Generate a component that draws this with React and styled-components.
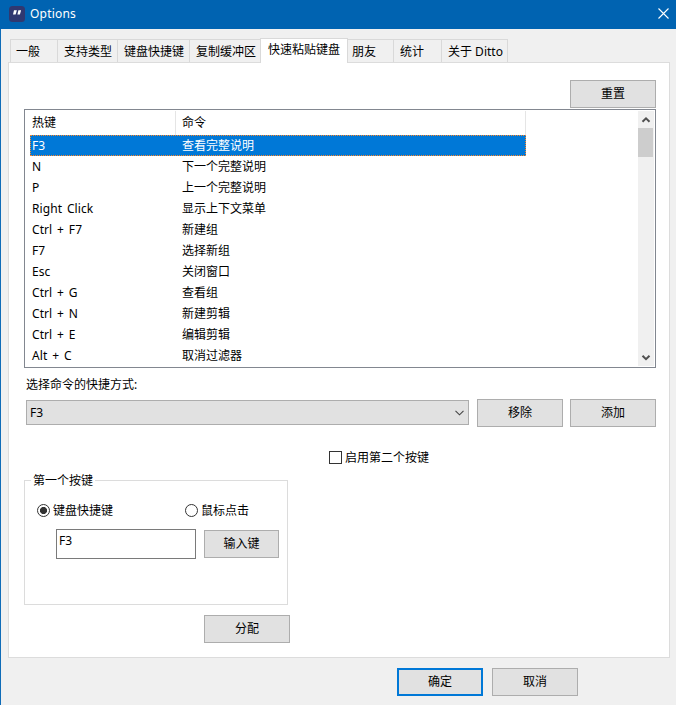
import React, { useState } from 'react';
import styled, { createGlobalStyle } from 'styled-components';

const tabs = [
  { label: '一般', width: 47 },
  { label: '支持类型', width: 60 },
  { label: '键盘快捷键', width: 72 },
  { label: '复制缓冲区', width: 71 },
  { label: '快速粘贴键盘', width: 87 },
  { label: '朋友', width: 46 },
  { label: '统计', width: 48 },
  { label: '关于 Ditto', width: 66 },
];

const shortcuts = [
  { key: 'F3', command: '查看完整说明' },
  { key: 'N', command: '下一个完整说明' },
  { key: 'P', command: '上一个完整说明' },
  { key: 'Right Click', command: '显示上下文菜单' },
  { key: 'Ctrl + F7', command: '新建组' },
  { key: 'F7', command: '选择新组' },
  { key: 'Esc', command: '关闭窗口' },
  { key: 'Ctrl + G', command: '查看组' },
  { key: 'Ctrl + N', command: '新建剪辑' },
  { key: 'Ctrl + E', command: '编辑剪辑' },
  { key: 'Alt + C', command: '取消过滤器' },
];

const App = () => {
  const [activeTab, setActiveTab] = useState(4);
  const [selected, setSelected] = useState(0);
  const [inputType, setInputType] = useState('keyboard');
  const [second, setSecond] = useState(false);

  return (
    <>
      <GlobalStyle />
      <Window>
        <TitleBar>
          <AppIcon viewBox="0 0 16 16">
            <rect width="16" height="16" rx="3.5" fill="#303870" />
            <path d="M5 4.2h2.9L6.6 8.4H4zM9.4 4.2h2.7L10.9 8.4H8.4z" fill="#fff" />
          </AppIcon>
          <Title>Options</Title>
          <CloseIcon viewBox="0 0 11 11">
            <path d="M.5.5l10 10M10.5.5l-10 10" stroke="#fff" strokeWidth="1.1" />
          </CloseIcon>
        </TitleBar>

        <TabStrip>
          {tabs.map((tab, i) => (
            <Tab
              key={tab.label}
              $width={tab.width}
              $active={i === activeTab}
              $first={i === 0}
              $afterActive={i === activeTab + 1}
              onClick={() => setActiveTab(i)}
            >
              {tab.label}
            </Tab>
          ))}
        </TabStrip>

        <Page>
          <ResetRow>
            <Button>重置</Button>
          </ResetRow>

          <ListView>
            <ListBody>
              <HeaderRow>
                <HeaderCell $width={151}>热键</HeaderCell>
                <HeaderCell $width={350}>命令</HeaderCell>
              </HeaderRow>
              {shortcuts.map((item, i) => (
                <Row key={item.key} $selected={i === selected} onClick={() => setSelected(i)}>
                  <KeyCell>{item.key}</KeyCell>
                  <span>{item.command}</span>
                </Row>
              ))}
            </ListBody>
            <ScrollBar>
              <ScrollArrow viewBox="0 0 16 17">
                <path d="M4.5 10.8L8 7.3l3.5 3.5" fill="none" stroke="#505050" strokeWidth="2" />
              </ScrollArrow>
              <Thumb />
              <ScrollArrow viewBox="0 0 16 17">
                <path d="M4.5 6.7L8 10.2l3.5-3.5" fill="none" stroke="#505050" strokeWidth="2" />
              </ScrollArrow>
            </ScrollBar>
          </ListView>

          <Label>选择命令的快捷方式:</Label>
          <ShortcutRow>
            <Select>
              F3
              <Chevron viewBox="0 0 9 6">
                <path d="M.5.8l4 4 4-4" fill="none" stroke="#444" strokeWidth="1.1" />
              </Chevron>
            </Select>
            <Button>移除</Button>
            <Button>添加</Button>
          </ShortcutRow>

          <CheckLabel onClick={() => setSecond(!second)}>
            <CheckBox>{second ? '✓' : ''}</CheckBox>
            <Caption>启用第二个按键</Caption>
          </CheckLabel>

          <Group>
            <Legend>第一个按键</Legend>
            <RadioRow>
              <RadioLabel $width={148} onClick={() => setInputType('keyboard')}>
                <Radio $checked={inputType === 'keyboard'} />
                <Caption>键盘快捷键</Caption>
              </RadioLabel>
              <RadioLabel $width={90} onClick={() => setInputType('mouse')}>
                <Radio $checked={inputType === 'mouse'} />
                <Caption>鼠标点击</Caption>
              </RadioLabel>
            </RadioRow>
            <KeyRow>
              <KeyBox>F3</KeyBox>
              <Button $width={75}>输入键</Button>
            </KeyRow>
          </Group>

          <AssignRow>
            <Button>分配</Button>
          </AssignRow>
        </Page>

        <Footer>
          <Button $primary>确定</Button>
          <Button>取消</Button>
        </Footer>
      </Window>
    </>
  );
};

export default App;

// Styled Components

const GlobalStyle = createGlobalStyle`
  * {
    box-sizing: border-box;
  }

  body {
    margin: 0;
    font-family: "Noto Sans", "Noto Sans CJK SC", sans-serif;
    font-size: 12px;
    color: #000;
    background: #f0f0f0;
    overflow: hidden;
  }
`;

const Window = styled.div`
  display: flex;
  flex-direction: column;
  width: 676px;
  height: 705px;
  border-left: 1px solid #0f6cb8;
  background: #f0f0f0;
  line-height: 18px;
  white-space: nowrap;
  cursor: default;
  user-select: none;
`;

const TitleBar = styled.header`
  display: flex;
  align-items: center;
  height: 29px;
  margin-left: -1px;
  padding: 0 7px 2px 9px;
  background: #0063b1;
  color: #fff;
`;

const AppIcon = styled.svg`
  width: 16px;
  height: 16px;
`;

const Title = styled.span`
  flex: 1;
  margin-left: 5px;
  font-size: 12px;
  letter-spacing: 0.2px;
`;

const CloseIcon = styled.svg`
  width: 11px;
  height: 11px;
`;

const TabStrip = styled.nav`
  display: flex;
  align-items: flex-end;
  height: 34px;
  padding-left: 9px;
`;

const Tab = styled.div`
  width: ${(props) => props.$width + (props.$first || props.$active ? 1 : 0)}px;
  height: ${(props) => (props.$active ? 25 : 23)}px;
  margin-left: ${(props) => (props.$active ? -1 : 0)}px;
  margin-bottom: ${(props) => (props.$active ? 0 : 1)}px;
  padding-top: ${(props) => (props.$active ? 2 : 3)}px;
  padding-left: ${(props) => (props.$active ? 7 : props.$afterActive ? 4 : props.$first ? 5 : 6)}px;
  border: 1px solid #d9d9d9;
  border-bottom: none;
  border-left-width: ${(props) => (props.$first || props.$active ? 1 : 0)}px;
  background: ${(props) => (props.$active ? '#fff' : '#f0f0f0')};
  z-index: 1;
`;

const Page = styled.main`
  width: 662px;
  height: 596px;
  margin: -1px 0 0 7px;
  padding: 17px 13px 0 15px;
  border: 1px solid #dcdcdc;
  background: #fff;
`;

const Button = styled.button`
  flex: none;
  width: ${(props) => props.$width || 86}px;
  height: 28px;
  padding: 0 0 1px;
  border: ${(props) => (props.$primary ? '2px solid #0078d7' : '1px solid #adadad')};
  background: #e1e1e1;
  color: #000;
  font: inherit;
`;

const ResetRow = styled.div`
  display: flex;
  justify-content: flex-end;
`;

const ListView = styled.section`
  display: flex;
  justify-content: space-between;
  width: 632px;
  height: 259px;
  margin-top: 1px;
  padding: 0 1px 0 5px;
  border: 1px solid #828790;
`;

const ListBody = styled.div`
  width: 496px;
`;

const HeaderRow = styled.div`
  display: flex;
  height: 25px;
  padding-top: 1px;
  margin-left: -5px;
`;

const HeaderCell = styled.div`
  width: ${(props) => props.$width}px;
  padding: 3px 0 0 7px;
  border-right: 1px solid #e5e5e5;

  &:last-child {
    padding-left: 6px;
  }
`;

const Row = styled.div`
  display: flex;
  align-items: center;
  height: 21px;
  padding-left: 1px;
  border: 1px dotted ${(props) => (props.$selected ? '#ff8728' : 'transparent')};
  background: ${(props) => (props.$selected ? '#0078d7' : '#fff')};
  background-clip: border-box;
  color: ${(props) => (props.$selected ? '#fff' : '#000')};
`;

const KeyCell = styled.span`
  width: 150px;
  letter-spacing: 0.08px;
  word-spacing: 1.6px;
`;

const ScrollBar = styled.div`
  display: flex;
  flex-direction: column;
  width: 16px;
  height: 255px;
  margin-top: 1px;
  background: #f0f0f0;

  svg:last-child {
    margin-top: auto;
  }
`;

const ScrollArrow = styled.svg`
  flex: none;
  width: 16px;
  height: 17px;
`;

const Thumb = styled.div`
  width: 15px;
  height: 29px;
  background: #cdcdcd;
`;

const Label = styled.div`
  margin: 8px 0 0 2px;
  height: 18px;
`;

const ShortcutRow = styled.div`
  display: flex;
  align-items: flex-start;
  gap: 7px;
  margin: 5px 0 0 2px;
`;

const Select = styled.div`
  display: flex;
  align-items: center;
  justify-content: space-between;
  width: 443px;
  height: 25px;
  margin: 1px 1px 0 0;
  padding: 0 4px 0 3px;
  border: 1px solid #adadad;
  background: #e1e1e1;
`;

const Chevron = styled.svg`
  width: 9px;
  height: 6px;
`;

const CheckLabel = styled.div`
  display: flex;
  align-items: center;
  width: 110px;
  height: 18px;
  margin: 21px 0 0 305px;
`;

const Caption = styled.span`
  padding-top: 2px;
  line-height: 16px;
`;

const CheckBox = styled.span`
  width: 13px;
  height: 13px;
  margin-right: 3px;
  border: 1px solid #333;
  background: #fff;
  font-size: 10px;
  line-height: 11px;
`;

const Group = styled.section`
  width: 264px;
  height: 125px;
  margin-top: 14px;
  border: 1px solid #dcdcdc;
`;

const Legend = styled.div`
  width: 64px;
  height: 18px;
  margin: -9px 0 0 6px;
  padding-left: 2px;
  background: #fff;
`;

const RadioRow = styled.div`
  display: flex;
  margin: 11px 0 0 12px;
`;

const RadioLabel = styled.div`
  display: flex;
  align-items: center;
  width: ${(props) => props.$width}px;
`;

const Radio = styled.span`
  width: 13px;
  height: 13px;
  margin-right: 3px;
  border: 1px solid #333;
  border-radius: 50%;
  background: ${(props) => (props.$checked ? 'radial-gradient(circle, #333 3.2px, #fff 3.9px)' : '#fff')};
`;

const KeyRow = styled.div`
  display: flex;
  align-items: flex-start;
  gap: 8px;
  margin: 10px 0 0 31px;

  button {
    margin-top: 1px;
  }
`;

const KeyBox = styled.div`
  width: 140px;
  height: 30px;
  padding: 2px;
  border: 1px solid #7a7a7a;
  background: #fff;
`;

const AssignRow = styled.div`
  margin: 10px 0 0 180px;
`;

const Footer = styled.footer`
  display: flex;
  gap: 9px;
  margin: 10px 0 0 396px;
`;
